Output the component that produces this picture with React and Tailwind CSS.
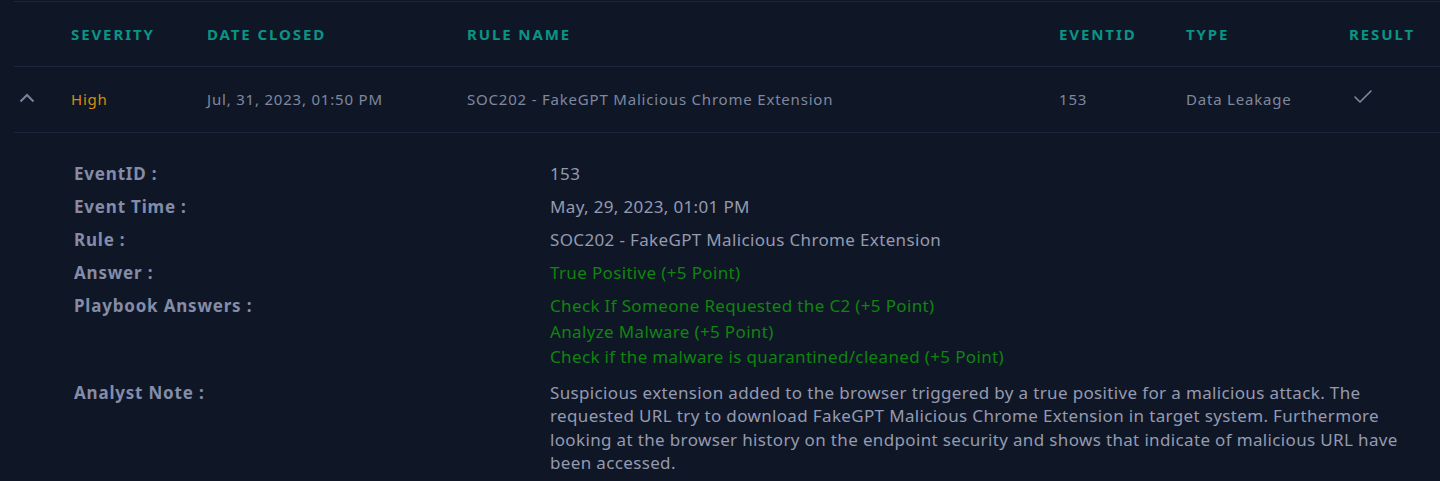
import { Check } from 'lucide-react'

const FONT = { fontFamily: '"Noto Sans", "Open Sans", sans-serif' }

const HEADERS = [
  { label: '', w: 'w-[57px]' },
  { label: 'Severity', w: 'w-[136px]' },
  { label: 'Date Closed', w: 'w-[260px]' },
  { label: 'Rule Name', w: 'w-[592px]' },
  { label: 'EventID', w: 'w-[127px]' },
  { label: 'Type', w: 'w-[163px]' },
  { label: 'Result', w: 'flex-1' },
]

const DETAILS = [
  { label: 'EventID :', values: ['153'] },
  { label: 'Event Time :', values: ['May, 29, 2023, 01:01 PM'] },
  { label: 'Rule :', values: ['SOC202 - FakeGPT Malicious Chrome Extension'] },
  { label: 'Answer :', values: ['True Positive (+5 Point)'], green: true },
  {
    label: 'Playbook Answers :',
    values: [
      'Check If Someone Requested the C2 (+5 Point)',
      'Analyze Malware (+5 Point)',
      'Check if the malware is quarantined/cleaned (+5 Point)',
    ],
    green: true,
  },
]

export default function App() {
  return (
    <div className="min-h-screen bg-[#0f1727] pl-[14px] pt-px overflow-hidden" style={FONT}>
      <div className="border-t border-[#1d2640]">
        {/* header */}
        <div className="flex items-center h-[65px] border-b border-[#1d2640]">
          {HEADERS.map((h, i) => (
            <div key={i} className={`${h.w} text-[15px] font-bold uppercase tracking-[1.9px] text-[#0a9486]`}>
              {h.label}
            </div>
          ))}
        </div>

        {/* row */}
        <div className="flex items-center h-[66px] border-b border-[#1d2640] text-[15px] tracking-[0.8px] text-[#7f879f]">
          <div className="w-[57px] pl-[5px]">
            <svg width="16" height="10" viewBox="0 0 16 10" className="-mt-[4px]">
              <path d="M1.5 8.5 L8 2 L14.5 8.5" fill="none" stroke="#7a82a0" strokeWidth="2" />
            </svg>
          </div>
          <div className="w-[136px] text-[#dc890c]">High</div>
          <div className="w-[260px]">Jul, 31, 2023, 01:50 PM</div>
          <div className="w-[592px]">SOC202 - FakeGPT Malicious Chrome Extension</div>
          <div className="w-[127px]">153</div>
          <div className="w-[163px]">Data Leakage</div>
          <div className="flex-1 pl-[2px]">
            <Check size={24} strokeWidth={1.6} className="text-[#8088a0] -mt-[6px]" />
          </div>
        </div>

        {/* details */}
        <div className="pl-[60px] pt-[28px] text-[17px] tracking-[0.35px]">
          {DETAILS.map((d) => (
            <div key={d.label} className="flex mb-[7.5px]">
              <div className="w-[476px] shrink-0 font-bold tracking-[0.8px] text-[#848ca8] leading-[25.5px]">{d.label}</div>
              <div className={`leading-[25.5px] ${d.green ? 'text-[#0f840f]' : 'text-[#959ab0]'}`}>
                {d.values.map((v) => (
                  <div key={v}>{v}</div>
                ))}
              </div>
            </div>
          ))}
          <div className="flex mt-[11px]">
            <div className="w-[476px] shrink-0 font-bold tracking-[0.8px] text-[#848ca8] leading-[23.5px]">Analyst Note :</div>
            <div className="w-[866px] leading-[23.5px] text-[#959ab0]">
              Suspicious extension added to the browser triggered by a true positive for a malicious attack. The
              requested URL try to download FakeGPT Malicious Chrome Extension in target system. Furthermore
              looking at the browser history on the endpoint security and shows that indicate of malicious URL have
              been accessed.
            </div>
          </div>
        </div>
      </div>
    </div>
  )
}
